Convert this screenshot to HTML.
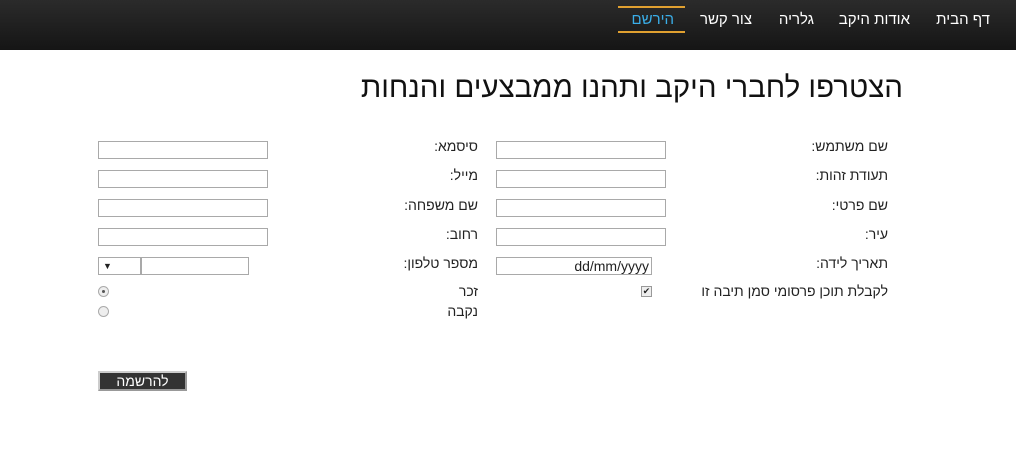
<!DOCTYPE html>
<html><head><meta charset="utf-8"><style>
body{margin:0;width:1016px;height:469px;background:#fff;font-family:"Liberation Sans","Noto Sans CJK SC",sans-serif;position:relative;overflow:hidden;color:#222}
.nav{position:absolute;left:0;top:0;width:1016px;height:50px;background:linear-gradient(#2b2b2b,#151515)}
.n{position:absolute;top:11px;color:#fff;font-size:15px;white-space:nowrap}
.a{position:absolute}
.lab{position:absolute;font-size:14px;direction:rtl;text-align:right;white-space:nowrap;color:#222}
.in{position:absolute;height:16px;border:1px solid #a9a9a9;background:#fff;box-sizing:content-box}
</style></head><body>
<div class="nav">
<span class="n" style="right:26px">דף הבית</span>
<span class="n" style="right:106px">אודות היקב</span>
<span class="n" style="right:202px">גלריה</span>
<span class="n" style="right:264px">צור קשר</span>
<span class="n" style="right:342px;color:#3aaee8">הירשם</span>
<div class="a" style="left:618px;top:6px;width:67px;height:2px;background:#e0a030"></div>
<div class="a" style="left:618px;top:31px;width:67px;height:2px;background:#e0a030"></div>
</div>
<div class="a" style="right:113px;top:71px;font-size:29.5px;color:#111;direction:rtl;white-space:nowrap">הצטרפו לחברי היקב ותהנו ממבצעים והנחות</div>

<div class="lab" style="right:128px;top:138px">שם משתמש:</div>
<div class="lab" style="right:128px;top:167px">תעודת זהות:</div>
<div class="lab" style="right:128px;top:197px">שם פרטי:</div>
<div class="lab" style="right:128px;top:226px">עיר:</div>
<div class="lab" style="right:128px;top:255px">תאריך לידה:</div>
<div class="lab" style="right:128px;top:283px">לקבלת תוכן פרסומי סמן תיבה זו</div>

<div class="lab" style="right:538px;top:138px">סיסמא:</div>
<div class="lab" style="right:538px;top:167px">מייל:</div>
<div class="lab" style="right:538px;top:197px">שם משפחה:</div>
<div class="lab" style="right:538px;top:226px">רחוב:</div>
<div class="lab" style="right:538px;top:255px">מספר טלפון:</div>
<div class="lab" style="right:538px;top:283px">זכר</div>
<div class="lab" style="right:538px;top:303px">נקבה</div>

<div class="in" style="left:496px;top:141px;width:168px"></div>
<div class="in" style="left:496px;top:170px;width:168px"></div>
<div class="in" style="left:496px;top:199px;width:168px"></div>
<div class="in" style="left:496px;top:228px;width:168px"></div>
<div class="in" style="left:496px;top:257px;width:154px;font-size:14px;text-align:right;line-height:17px;padding-right:0"><span style="margin-right:2px">dd/mm/yyyy</span></div>

<div class="in" style="left:98px;top:141px;width:168px"></div>
<div class="in" style="left:98px;top:170px;width:168px"></div>
<div class="in" style="left:98px;top:199px;width:168px"></div>
<div class="in" style="left:98px;top:228px;width:168px"></div>
<div class="in" style="left:98px;top:257px;width:41px;font-size:9px;line-height:16px;padding-left:0"><span style="margin-left:4px">▼</span></div>
<div class="in" style="left:141px;top:257px;width:106px"></div>

<div class="a" style="left:641px;top:286px;width:9px;height:9px;border:1px solid #999;background:#eee;font-size:9px;line-height:9px;text-align:center">✔</div>
<div class="a" style="left:98px;top:286px;width:9px;height:9px;border:1px solid #aaa;border-radius:50%;background:#eee"><div style="position:absolute;left:3px;top:3px;width:3px;height:3px;border-radius:50%;background:#555"></div></div>
<div class="a" style="left:98px;top:306px;width:9px;height:9px;border:1px solid #aaa;border-radius:50%;background:#eee"></div>

<div class="a" style="left:98px;top:371px;width:85px;height:16px;background:#333;border:2px solid #999;border-top-color:#ccc;border-left-color:#ccc;color:#fff;font-size:14px;text-align:center;line-height:16px">להרשמה</div>
</body></html>
